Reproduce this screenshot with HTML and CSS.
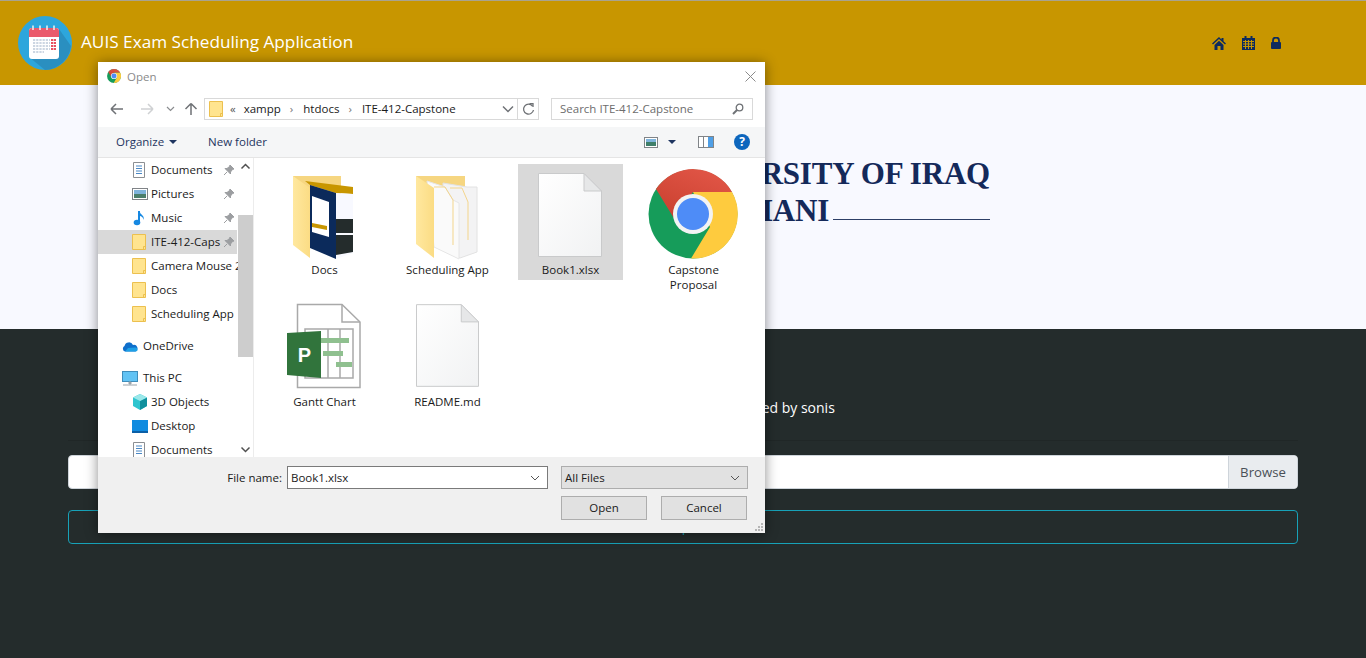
FILE: index.html
```html
<!DOCTYPE html>
<html lang="en">
<head>
    <meta charset="UTF-8">
    <meta name="viewport" content="width=device-width, initial-scale=1.0">
    <title>AUIS Exam Scheduling Application</title>
    <link rel="stylesheet" href="styles.css">
</head>
<body>
    <svg class="defs" width="0" height="0">
        <defs>
            <linearGradient id="paper" x1="0" y1="0" x2="1" y2="1">
                <stop offset="0" stop-color="#ffffff"/>
                <stop offset="1" stop-color="#f1f2f3"/>
            </linearGradient>
            <linearGradient id="flap" x1="0" y1="0" x2="1" y2="0">
                <stop offset="0" stop-color="#ffe89f"/>
                <stop offset="1" stop-color="#fbdc84"/>
            </linearGradient>
            <linearGradient id="red" x1="0.8" y1="0" x2="0.2" y2="1">
                <stop offset="0" stop-color="#e25647"/>
                <stop offset="1" stop-color="#c9402f"/>
            </linearGradient>
            <symbol id="chrome" viewBox="0 0 90 90">
                <circle cx="45" cy="45" r="44.5" fill="#169c5a"/>
                <path d="M84 23A44.5 44.5 0 0 1 43 89.5L62 58L45 23Z" fill="#fecb3e"/>
                <path d="M8 20A44.5 44.5 0 0 1 84 23L45 23L27 51Z" fill="url(#red)"/>
                <circle cx="45" cy="45" r="20" fill="#f3f3f3"/>
                <circle cx="45" cy="45" r="16" fill="#4e8cf7"/>
            </symbol>
            <symbol id="blank" viewBox="0 0 64 84">
                <path d="M.5 .5H46L63.5 18V83.5H.5Z" fill="url(#paper)" stroke="#c9cacb"/>
                <path d="M46 .5V18H63.5Z" fill="#e6e7e8" stroke="#c9cacb"/>
            </symbol>
            <symbol id="folder-s" viewBox="0 0 16 16">
                <path d="M.5 .5H13.5V15.5H.5Z" fill="#ffe48f" stroke="#ecc04f"/>
                <path d="M11.500 15.500V12.500H13.500" fill="none" stroke="#ecc04f"/>
            </symbol>
            <symbol id="doc-s" viewBox="0 0 16 16">
                <path d="M1.500 .5H12.500V15.500H1.500Z" fill="#fff" stroke="#8c8f93"/>
                <path d="M4 4H10M4 6.500H10M4 9H10M4 11.500H10" stroke="#4a88c5"/>
            </symbol>
            <symbol id="pin" viewBox="0 0 12 12">
                <path d="M7 1L11 5L9.500 5.500L7.500 8L7.500 10L2 4.500L4 4.500L6.500 2.500ZM4 8L1 11" fill="#9c9ea1" stroke="#9c9ea1"/>
            </symbol>
        </defs>
    </svg>

    <header class="topbar">
        <svg class="logo" width="54" height="54" viewBox="0 0 54 54">
            <circle cx="27" cy="27" r="27" fill="#2da6dc"/>
            <path d="M41 13L53 30A27 27 0 0 1 27 54L11 41Z" fill="#2a8fc0"/>
            <rect x="11" y="12" width="30" height="31" rx="3" fill="#fff"/>
            <path d="M11 21V15a3 3 0 0 1 3-3H38a3 3 0 0 1 3 3V21Z" fill="#ea5a6c"/>
            <path d="M15 9.500V14M22 9.500V14M29 9.500V14M36 9.500V14" stroke="#f2f2f2" stroke-width="1.500"/>
            <path d="M15 24H32M15 27H32M15 30H32M15 33H32M15 36H26" stroke="#ccd6e2" stroke-width="2" stroke-dasharray="2.200 1"/>
            <path d="M33 24H38M33 27H38M33 30H38M33 33H38" stroke="#e8505f" stroke-width="2" stroke-dasharray="2.200 .6"/>
        </svg>
        <h1 class="app_title">AUIS Exam Scheduling Application</h1>
        <nav class="top_nav">
            <svg width="14" height="13" viewBox="0 0 14 13"><path d="M7 0L0 6.500L1 7.500L7 2L13 7.500L14 6.500L11.500 4.200V1H9.500V2.400ZM2.500 8L7 3.800L11.500 8V13H8.500V9H5.500V13H2.500Z" fill="#0d2a5e"/></svg>
            <svg width="13" height="14" viewBox="0 0 13 14"><path d="M0 2H2.500V0H4.500V2H8.500V0H10.500V2H13V14H0Z" fill="#0d2a5e"/><path d="M1 5.500H12M1 8H12M1 10.500H12M3.500 4V13M6.500 4V13M9.500 4V13" stroke="#c89600"/></svg>
            <svg width="10" height="12" viewBox="0 0 10 12"><path d="M2 5.500V3.500a3 3 0 0 1 6 0V5.500" fill="none" stroke="#0d2a5e" stroke-width="1.800"/><rect y="5" width="10" height="7" rx="1" fill="#0d2a5e"/></svg>
        </nav>
    </header>

    <section class="hero">
        <div class="brand">
            <div class="brand_line">AMERICAN UNIVERSITY OF IRAQ</div>
            <div class="brand_line brand_rule"><span>SULAIMANI</span><i class="rule"></i></div>
        </div>
    </section>

    <main class="upload">
        <p class="upload_hint">Please upload the Excel file generated by sonis</p>
        <hr class="divider">
        <div class="file_input">
            <div class="file_name"></div>
            <div class="file_browse">Browse</div>
        </div>
        <div class="upload_alert">File upload</div>
    </main>

    <div class="dialog">
        <div class="dlg_title">
            <svg width="14" height="14"><use href="#chrome" width="14" height="14"/></svg>
            <span class="dlg_title_text">Open</span>
            <svg class="dlg_close" width="11" height="11" viewBox="0 0 11 11"><path d="M.5 .5L10.500 10.500M10.500 .5L.5 10.500" stroke="#8a8a8a"/></svg>
        </div>

        <div class="dlg_address">
            <svg class="nav_arrows" width="90" height="14" viewBox="0 0 90 14">
                <path d="M1 7H13M1 7L6 2M1 7L6 12" fill="none" stroke="#6f7276" stroke-width="1.500"/>
                <path d="M43 7H31M43 7L38 2M43 7L38 12" fill="none" stroke="#cfd1d3" stroke-width="1.500"/>
                <path d="M57 5L60.500 8.500L64 5" fill="none" stroke="#8a8c8f" stroke-width="1.200"/>
                <path d="M81 13V1.500M81 1.500L75.500 7M81 1.500L86.500 7" fill="none" stroke="#6f7276" stroke-width="1.500"/>
            </svg>
            <div class="crumbs">
                <svg class="crumb_folder" width="16" height="16"><use href="#folder-s" width="16" height="16"/></svg>
                <span class="crumb_more">«</span>
                <span class="crumb">xampp</span><span class="crumb_sep">›</span>
                <span class="crumb">htdocs</span><span class="crumb_sep">›</span>
                <span class="crumb crumb_last">ITE-412-Capstone</span>
                <svg class="crumb_down" width="12" height="8" viewBox="0 0 12 8"><path d="M1 1.500L6 6.500L11 1.500" fill="none" stroke="#6f7276" stroke-width="1.500"/></svg>
                <div class="crumb_refresh">
                    <svg width="13" height="13" viewBox="0 0 13 13"><path d="M10.500 3A5 5 0 1 0 11.500 7" fill="none" stroke="#6f7276" stroke-width="1.300"/><path d="M7.500 .5H11V4" fill="none" stroke="#6f7276" stroke-width="1.300"/></svg>
                </div>
            </div>
            <div class="search">
                <span>Search ITE-412-Capstone</span>
                <svg width="12" height="12" viewBox="0 0 12 12"><circle cx="7.500" cy="4.500" r="3.300" fill="none" stroke="#6f7276" stroke-width="1.300"/><path d="M5 7L1 11" stroke="#6f7276" stroke-width="2"/></svg>
            </div>
        </div>

        <div class="dlg_toolbar">
            <span class="tool">Organize</span>
            <i class="caret"></i>
            <span class="tool tool_new">New folder</span>
            <div class="tool_right">
                <svg width="14" height="11" viewBox="0 0 14 11"><rect x=".5" y=".5" width="13" height="10" fill="#fff" stroke="#808488"/><rect x="2" y="2" width="10" height="3" fill="#7fb4dc"/><rect x="2" y="5" width="10" height="4" fill="#3f7f6a"/></svg>
                <i class="caret"></i>
                <svg class="pane_icon" width="16" height="12" viewBox="0 0 16 12"><rect x=".5" y=".5" width="15" height="11" fill="#fff" stroke="#808488"/><rect x="10" y="1" width="5" height="10" fill="#4f9fe6"/><path d="M5.500 1V11" stroke="#808488"/></svg>
                <div class="help">?</div>
            </div>
        </div>

        <div class="dlg_body">
            <div class="side">
                <ul class="side_list">
                    <li class="side_row"><svg width="16" height="16"><use href="#doc-s" width="16" height="16"/></svg><span class="side_name">Documents</span><svg class="pin" width="12" height="12"><use href="#pin" width="12" height="12"/></svg></li>
                    <li class="side_row"><svg width="16" height="14" viewBox="0 0 16 14"><rect x=".5" y="1.500" width="15" height="11" fill="#fff" stroke="#808488"/><rect x="2" y="3" width="12" height="4" fill="#7fb4dc"/><rect x="2" y="7" width="12" height="4" fill="#4b7f6c"/></svg><span class="side_name">Pictures</span><svg class="pin" width="12" height="12"><use href="#pin" width="12" height="12"/></svg></li>
                    <li class="side_row"><svg width="16" height="16" viewBox="0 0 16 16"><path d="M7 1V12" stroke="#1688e2" stroke-width="2"/><path d="M7.500 1C8 5 13 5 11.500 10C11 6.500 9 6.500 8 6" fill="#1688e2"/><ellipse cx="5" cy="12.500" rx="3.300" ry="2.800" fill="#1688e2"/></svg><span class="side_name">Music</span><svg class="pin" width="12" height="12"><use href="#pin" width="12" height="12"/></svg></li>
                    <li class="side_row side_on"><svg width="16" height="16"><use href="#folder-s" width="16" height="16"/></svg><span class="side_name">ITE-412-Caps</span><svg class="pin" width="12" height="12"><use href="#pin" width="12" height="12"/></svg></li>
                    <li class="side_row"><svg width="16" height="16"><use href="#folder-s" width="16" height="16"/></svg><span class="side_name">Camera Mouse 2</span></li>
                    <li class="side_row"><svg width="16" height="16"><use href="#folder-s" width="16" height="16"/></svg><span class="side_name">Docs</span></li>
                    <li class="side_row"><svg width="16" height="16"><use href="#folder-s" width="16" height="16"/></svg><span class="side_name">Scheduling App</span></li>
                    <li class="side_row side_root side_gap"><svg width="16" height="11" viewBox="0 0 16 11"><path d="M3 10.500A3 3 0 0 1 2.500 5A4.500 4.500 0 0 1 11 4A3.500 3.500 0 0 1 13.500 10.500Z" fill="#0f6fcb"/><path d="M3 10.500H14A2 2 0 0 0 13 6.500L6 7Z" fill="#1ea0e6"/></svg><span class="side_name">OneDrive</span></li>
                    <li class="side_row side_root side_gap"><svg width="16" height="15" viewBox="0 0 16 15"><rect x=".5" y=".5" width="15" height="10" fill="#62c3f4" stroke="#3f8dbb"/><path d="M7 11H9V13H7ZM1 14H15" fill="#9aa3aa" stroke="#9aa3aa"/></svg><span class="side_name">This PC</span></li>
                    <li class="side_row"><svg width="16" height="16" viewBox="0 0 16 16"><path d="M8 0L15 3.500V12L8 16L1 12V3.500Z" fill="#2fc5cf"/><path d="M8 7L15 3.500V12L8 16Z" fill="#0f8f9c"/><path d="M8 7L1 3.500L8 0L15 3.500Z" fill="#9be8ea"/></svg><span class="side_name">3D Objects</span></li>
                    <li class="side_row"><svg width="16" height="13" viewBox="0 0 16 13"><rect width="16" height="13" fill="#0f8be0"/><rect y="11" width="16" height="2" fill="#0a5fa6"/></svg><span class="side_name">Desktop</span></li>
                    <li class="side_row"><svg width="16" height="16"><use href="#doc-s" width="16" height="16"/></svg><span class="side_name">Documents</span></li>
                </ul>
                <div class="scroll">
                    <svg class="scroll_btn" width="15" height="14" viewBox="0 0 15 14"><path d="M3.500 8.500L7.500 4.500L11.500 8.500" fill="none" stroke="#505050" stroke-width="1.500"/></svg>
                    <div class="scroll_thumb"></div>
                    <svg class="scroll_btn scroll_end" width="15" height="14" viewBox="0 0 15 14"><path d="M3.500 5.500L7.500 9.500L11.500 5.500" fill="none" stroke="#505050" stroke-width="1.500"/></svg>
                </div>
            </div>
            <div class="files">
                <div class="file">
                    <svg class="thumb" width="105" height="96" viewBox="0 0 105 96">
                        <path d="M21 10H69V30H21Z" fill="#f6d681"/>
                        <path d="M33 15L81 21V28L64 27L38 19Z" fill="#c89600"/>
                        <path d="M38 19L64 27V93L38 82Z" fill="#0b2a5b"/>
                        <path d="M40 30L57 36V71L40 66Z" fill="#fff"/>
                        <path d="M40 57L55 60V64L40 61Z" fill="#c89600"/>
                        <path d="M64 27L81 28V87L64 93Z" fill="#f8f9ff"/>
                        <path d="M64 53L81 53V67L64 67ZM64 69L81 69V86L64 89Z" fill="#242c2c"/>
                        <path d="M21 10L38 22V92L21 79Z" fill="url(#flap)"/>
                    </svg>
                    <div class="file_label">Docs</div>
                </div>
                <div class="file">
                    <svg class="thumb" width="105" height="96" viewBox="0 0 105 96">
                        <path d="M21 10H70V30H21Z" fill="#f6d681"/>
                        <path d="M48 17L72 21H82V86L65 92L48 81Z" fill="#f3f3f4" stroke="#e2e2e2"/>
                        <path d="M55 22H67L73 36V74" fill="none" stroke="#f3d58c"/>
                        <path d="M32 15L50 21L58 34L64 37V93L39 81Z" fill="#fafafa" stroke="#e6e6e6"/>
                        <path d="M39 21H50L58 34V79" fill="none" stroke="#f3d58c"/>
                        <path d="M21 10L39 22V92L21 78Z" fill="url(#flap)"/>
                    </svg>
                    <div class="file_label">Scheduling App</div>
                </div>
                <div class="file file_on">
                    <svg class="thumb" width="105" height="96" viewBox="0 0 105 96"><use href="#blank" x="20" y="7" width="64" height="84"/></svg>
                    <div class="file_label">Book1.xlsx</div>
                </div>
                <div class="file">
                    <svg class="thumb" width="105" height="96" viewBox="0 0 105 96"><use href="#chrome" x="7" y="3" width="90" height="90"/></svg>
                    <div class="file_label">Capstone Proposal</div>
                </div>
                <div class="file">
                    <svg class="thumb" width="105" height="96" viewBox="0 0 105 96">
                        <path d="M25.500 6.500H70L88 24V89.500H25.500Z" fill="#fff" stroke="#a9a9a9" stroke-width="1.500"/>
                        <path d="M70 6.500V24H88" fill="none" stroke="#a9a9a9" stroke-width="1.500"/>
                        <path d="M33 31H81V80H33ZM56 31V80M68 31V80" fill="none" stroke="#a9a9a9" stroke-width="1.500"/>
                        <path d="M49 40H77V45H49ZM51 53H71V58H51ZM64 64H80V69H64Z" fill="#8fc08f"/>
                        <path d="M15 35L49 33V80L15 77Z" fill="#31743c"/>
                        <text class="tile_p" x="32.500" y="64">P</text>
                    </svg>
                    <div class="file_label">Gantt Chart</div>
                </div>
                <div class="file">
                    <svg class="thumb" width="105" height="96" viewBox="0 0 105 96"><use href="#blank" x="21" y="6" width="63" height="83"/></svg>
                    <div class="file_label">README.md</div>
                </div>
            </div>
        </div>

        <div class="dlg_footer">
            <div class="name_row">
                <label class="name_label">File name:</label>
                <div class="name_box">
                    <span>Book1.xlsx</span>
                    <svg width="10" height="6" viewBox="0 0 10 6"><path d="M1 1L5 5L9 1" fill="none" stroke="#555" stroke-width="1"/></svg>
                </div>
                <div class="type_box">
                    <span>All Files</span>
                    <svg width="10" height="6" viewBox="0 0 10 6"><path d="M1 1L5 5L9 1" fill="none" stroke="#555" stroke-width="1"/></svg>
                </div>
            </div>
            <div class="btn_row">
                <div class="dlg_btn">Open</div>
                <div class="dlg_btn">Cancel</div>
            </div>
        </div>
        <svg class="grip" width="10" height="10" viewBox="0 0 10 10"><path d="M7 1h2v2h-2zM4 4h2v2h-2zM7 4h2v2h-2zM1 7h2v2h-2zM4 7h2v2h-2zM7 7h2v2h-2z" fill="#b5b5b5"/></svg>
    </div>
</body>
</html>
```

FILE: styles.css
```css
*
{
    box-sizing: border-box;
}
html, body
{
    height: 100%;
}
body
{
    margin: 0;
    display: flex;
    flex-direction: column;
    overflow: hidden;
    font-family: "Open Sans", "Noto Sans", sans-serif;
    background-color: #242c2c;
}
.defs
{
    display: block;
    height: 0;
}
.topbar
{
    height: 85px;
    flex: none;
    display: flex;
    align-items: center;
    padding-left: 18px;
    padding-right: 85px;
    background-color: #c89600;
    border-top: 1px solid #a9a38f;
}
.logo
{
    flex: none;
}
.app_title
{
    margin: 0 0 4px 9px;
    font-size: 17.200px;
    font-weight: 400;
    color: #fff;
}
.top_nav
{
    margin-left: auto;
    display: flex;
    align-items: center;
    gap: 16px;
}
.hero
{
    height: 244px;
    flex: none;
    display: flex;
    justify-content: flex-end;
    padding: 70px 376px 0 0;
    background-color: #f8f9ff;
}
.brand
{
    color: #14295a;
    font-family: "Liberation Serif", serif;
    font-size: 31px;
    font-weight: 700;
    line-height: 37px;
    letter-spacing: -0.2px;
}
.brand_rule
{
    display: flex;
    align-items: flex-end;
    justify-content: flex-end;
}
.rule
{
    width: 157px;
    height: 1px;
    margin: 0 0 9px 4px;
    background-color: #2d3f66;
}
.upload
{
    flex: 1;
    padding: 0 68px;
}
.upload_hint
{
    margin: 69px 0 0;
    line-height: 20px;
    font-size: 14px;
    text-align: center;
    color: #fff;
}
.divider
{
    margin: 22px 0 14px;
    border: 0;
    height: 1px;
    background-color: rgba(0, 0, 0, 0.1);
}
.file_input
{
    height: 34px;
    display: flex;
    background-color: #fff;
    border: 1px solid #ced4da;
    border-radius: 4px;
    overflow: hidden;
}
.file_name
{
    flex: 1;
}
.file_browse
{
    width: 69px;
    line-height: 32px;
    font-size: 13.200px;
    text-align: center;
    color: #495057;
    background-color: #e9ecef;
    border-left: 1px solid #ced4da;
}
.upload_alert
{
    height: 34px;
    margin-top: 21px;
    line-height: 32px;
    font-size: 13.500px;
    text-align: center;
    color: #17a2b8;
    border: 1px solid #17a2b8;
    border-radius: 4px;
}

/* open file window */
.dialog
{
    position: absolute;
    left: 98px;
    top: 62px;
    width: 667px;
    height: 471px;
    display: flex;
    flex-direction: column;
    font-size: 11.500px;
    color: #1a1a1a;
    background-color: #fff;
    box-shadow: 0 1px 12px rgba(0, 0, 0, 0.45);
}
.dlg_title
{
    height: 28px;
    flex: none;
    display: flex;
    align-items: center;
    padding: 0 9px;
}
.dlg_title_text
{
    margin-left: 6px;
    color: #8a8a8a;
}
.dlg_close
{
    margin-left: auto;
}
.dlg_address
{
    height: 22px;
    margin-top: 8px;
    flex: none;
    display: flex;
    align-items: center;
}
.nav_arrows
{
    flex: none;
    margin-left: 12px;
}
.crumbs
{
    width: 335px;
    height: 22px;
    margin-left: 4px;
    display: flex;
    align-items: center;
    padding-left: 4px;
    border: 1px solid #d9d9d9;
}
.crumb_folder
{
    flex: none;
}
.crumb_more
{
    margin: 0 -2px 2px 5px;
    color: #555;
}
.crumb
{
    margin: 0 0 2px 10px;
}
.crumb_sep
{
    margin: 0 0 2px 9px;
    color: #777;
}
.crumb_down
{
    margin-left: auto;
    margin-right: 3px;
}
.crumb_refresh
{
    width: 21px;
    height: 20px;
    display: flex;
    align-items: center;
    justify-content: center;
    border-left: 1px solid #d9d9d9;
}
.search
{
    width: 202px;
    height: 22px;
    margin-left: 12px;
    display: flex;
    align-items: center;
    justify-content: space-between;
    padding: 0 8px;
    color: #6d6d6d;
    border: 1px solid #d9d9d9;
}
.search span
{
    margin-bottom: 2px;
}
.dlg_toolbar
{
    height: 31px;
    margin-top: 7px;
    flex: none;
    display: flex;
    align-items: center;
    padding: 0 15px 0 18px;
    background-color: #f5f6f7;
    border-bottom: 1px solid #e5e5e5;
}
.tool
{
    margin-bottom: 2px;
    color: #1e3560;
}
.tool_new
{
    margin-left: 31px;
}
.caret
{
    width: 0;
    height: 0;
    margin-left: 5px;
    border-left: 4px solid transparent;
    border-right: 4px solid transparent;
    border-top: 4px solid #1e3560;
}
.tool_right
{
    margin-left: auto;
    display: flex;
    align-items: center;
}
.tool_right .caret
{
    margin-left: 10px;
}
.pane_icon
{
    margin-left: 22px;
}
.help
{
    width: 16px;
    height: 16px;
    margin-left: 20px;
    font-size: 12px;
    font-weight: 700;
    line-height: 16px;
    text-align: center;
    color: #fff;
    background-color: #0d66bd;
    border-radius: 50%;
}
.dlg_body
{
    flex: 1;
    min-height: 0;
    display: flex;
}
.side
{
    width: 156px;
    flex: none;
    display: flex;
    border-right: 1px solid #ececec;
    overflow: hidden;
}
.side_list
{
    width: 140px;
    flex: none;
    margin: 0;
    padding: 0;
    list-style: none;
}
.side_row
{
    height: 24px;
    display: flex;
    align-items: center;
    padding-left: 34px;
    position: relative;
    white-space: nowrap;
    overflow: hidden;
}
.side_row svg:first-child
{
    flex: none;
    width: 16px;
}
.side_on
{
    width: 139px;
    background-color: #d9d9d9;
}
.side_root
{
    padding-left: 24px;
}
.side_gap
{
    margin-top: 8px;
}
.side_name
{
    margin: 0 0 2px 3px;
}
.side_root .side_name
{
    margin-left: 5px;
}
.pin
{
    position: absolute;
    left: 125px;
    top: 6px;
}
.scroll
{
    width: 15px;
    flex: none;
    display: flex;
    flex-direction: column;
}
.scroll_btn
{
    flex: none;
    margin-top: 2px;
}
.scroll_thumb
{
    height: 142px;
    margin-top: 41px;
    background-color: #cdcdcd;
}
.scroll_end
{
    margin-top: auto;
    margin-bottom: 1px;
}
.files
{
    flex: 1;
    display: grid;
    grid-template-columns: repeat(4, 105px);
    grid-auto-rows: 132px;
    column-gap: 18px;
    align-content: start;
    padding: 6px 0 0 18px;
}
.file
{
    height: 116px;
    padding-top: 2px;
    text-align: center;
}
.file_on
{
    background-color: #d9d9d9;
}
.thumb
{
    display: block;
}
.file_label
{
    padding: 0 8px;
    line-height: 15px;
}
.tile_p
{
    font-family: "Liberation Sans", sans-serif;
    font-size: 20px;
    font-weight: 700;
    text-anchor: middle;
    fill: #fff;
}
.dlg_footer
{
    height: 76px;
    flex: none;
    padding: 9px 17px 0 0;
    background-color: #f0f0f0;
}
.name_row
{
    display: flex;
    align-items: flex-start;
    justify-content: flex-end;
}
.name_label
{
    margin-right: 5px;
    line-height: 23px;
}
.name_box, .type_box
{
    height: 23px;
    display: flex;
    align-items: center;
    justify-content: space-between;
    padding: 0 7px 0 3px;
}
.name_box
{
    width: 261px;
    background-color: #fff;
    border: 1px solid #7a7a7a;
}
.type_box
{
    width: 187px;
    height: 23px;
    margin-left: 13px;
    background-color: #e1e1e1;
    border: 1px solid #adadad;
}
.btn_row
{
    margin-top: 7px;
    padding-right: 1px;
    display: flex;
    justify-content: flex-end;
    gap: 14px;
}
.dlg_btn
{
    width: 86px;
    height: 24px;
    line-height: 22px;
    text-align: center;
    background-color: #e1e1e1;
    border: 1px solid #adadad;
}
.grip
{
    position: absolute;
    right: 1px;
    bottom: 1px;
}
```
